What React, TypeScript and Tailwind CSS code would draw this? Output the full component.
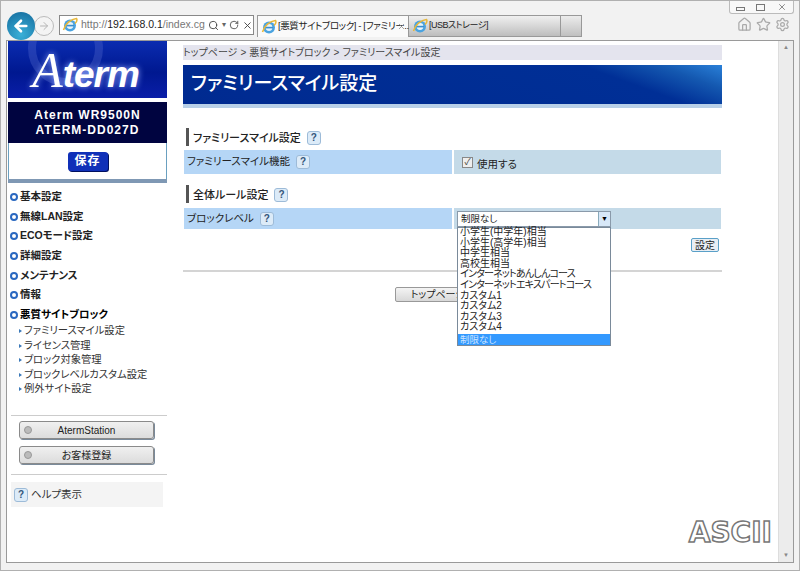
import { ArrowLeft, ArrowRight, Home, RotateCw, Search, Settings, Star, X } from "lucide-react";

const font = "font-['Liberation_Sans','Noto_Sans_CJK_JP',sans-serif] [font-feature-settings:'palt']";

const IeIcon = () => (
  <svg width="16" height="16" viewBox="0 0 16 16" className="shrink-0">
    <circle cx="8" cy="8.5" r="6" fill="#4aa3e0" />
    <circle cx="8" cy="8.5" r="3.4" fill="#e8f4fb" />
    <rect x="4" y="7.8" width="8" height="1.6" fill="#3b8fd0" />
    <path d="M1.5 13 C3 7 9 2 14.5 1.5 C15.5 3 14.5 5 13 6.5" fill="none" stroke="#e8b83a" strokeWidth="1.5" />
  </svg>
);

const HelpBadge = () => (
  <span className="inline-flex h-[14px] w-[14px] shrink-0 items-center justify-center rounded-[3px] border border-[#9dbbd8] bg-[#dcebf8] text-[10px] font-bold leading-none text-[#33557a]">
    ?
  </span>
);

const NavItem = ({ label, bold }: { label: string; bold?: boolean }) => (
  <div className={`flex h-[19.7px] items-center gap-[2px] whitespace-nowrap text-[10.5px] font-bold text-[#222] ${bold ? "text-black" : ""}`}>
    <span className="h-[8px] w-[8px] shrink-0 rounded-full border-[2px] border-[#2a68c0] bg-white" />
    {label}
  </div>
);

const SubItem = ({ label }: { label: string }) => (
  <div className="flex h-[14.5px] items-center gap-[2px] whitespace-nowrap pl-[9px] text-[10.3px] text-[#333]">
    <span className="h-0 w-0 border-y-[2.5px] border-l-[3px] border-y-transparent border-l-[#3a78b8]" />
    {label}
  </div>
);

const SideButton = ({ label }: { label: string }) => (
  <div className="relative flex h-[18px] w-[135px] items-center justify-center rounded-[3px] border border-[#8a8a8a] bg-[linear-gradient(#f0f0f0,#dcdcdc)] text-[10px] text-[#222] shadow-[1px_1px_0_#7a8a9a]">
    <span className="absolute left-[4px] h-[8px] w-[8px] rounded-full border border-[#999] bg-[#bbb]" />
    {label}
  </div>
);

const SectionHead = ({ label }: { label: string }) => (
  <div className="flex h-[18px] items-center gap-[4px] pl-[3px] text-[11px] text-[#222]">
    <span className="h-[18px] w-[3px] bg-[#555]" />
    <span className="pt-[2px] font-medium">{label}</span>
    <span className="ml-[2px]"><HelpBadge /></span>
  </div>
);

const levels = [
  "小学生(中学年)相当",
  "小学生(高学年)相当",
  "中学生相当",
  "高校生相当",
  "インターネットあんしんコース",
  "インターネットエキスパートコース",
  "カスタム1",
  "カスタム2",
  "カスタム3",
  "カスタム4",
];

const App = () => {
  return (
    <div className={`${font} relative flex h-[571px] w-[800px] flex-col overflow-hidden border border-[#b0b0b0] bg-[#f2f2f2]`}>
      {/* browser chrome */}
      <div className="flex h-[39px] shrink-0 flex-col">
        <div className="flex h-[15px] justify-end pr-[5px]">
          <div className="flex h-[13px] w-[65px] items-center justify-around rounded-b-[3px] border border-t-0 border-[#bbb] bg-[#f8f8f8] text-[#777]">
            <span className="mt-[3px] h-[4px] w-[9px] border border-[#777]" />
            <span className="h-[7px] w-[9px] border border-[#777]" />
            <X size={10} />
          </div>
        </div>
        <div className="flex items-start pl-[6px]">
          <div className="z-10 -mt-[3px] flex h-[28px] w-[28px] items-center justify-center rounded-full bg-[radial-gradient(circle_at_50%_80%,#3ab0d8,#146a9c)] text-white">
            <ArrowLeft size={18} strokeWidth={3.5} />
          </div>
          <div className="-ml-[1px] mt-[1px] flex h-[20px] w-[20px] items-center justify-center rounded-full border border-[#bbb] bg-[#f4f4f4] text-[#b5b5b5]">
            <ArrowRight size={12} />
          </div>
          <div className="ml-[5px] flex h-[20px] w-[195px] items-center gap-[3px] border border-[#888] bg-white pl-[2px] text-[10.5px] text-[#777]">
            <IeIcon />
            <span className="w-[124px] whitespace-nowrap">
              http://<span className="text-[#222]">192.168.0.1</span>/index.cg
            </span>
            <Search size={11} className="text-[#444]" />
            <span className="text-[8px] text-[#666]">▾</span>
            <RotateCw size={10} className="text-[#444]" />
            <X size={11} className="text-[#444]" />
          </div>
          <div className="ml-[3px] flex h-[22px] w-[152px] items-center gap-[1px] border border-b-0 border-[#999] bg-[#fafafa] pl-[3px] text-[9.5px] tracking-[-0.4px] text-[#222]">
            <IeIcon />
            <span className="w-[118px] whitespace-nowrap">[悪質サイトブロック] - [ファミリー..</span>
            <X size={9} className="text-[#888]" />
          </div>
          <div className="flex h-[22px] w-[152px] items-center gap-[1px] border border-l-0 border-[#999] bg-[linear-gradient(#f0f0f0,#bdbdbd)] pl-[3px] text-[9px] tracking-[-0.5px] text-[#222]">
            <IeIcon />
            [USBストレージ]
          </div>
          <div className="h-[22px] w-[21px] border border-l-0 border-[#999] bg-[linear-gradient(#ececec,#c0c0c0)]" />
          <div className="ml-auto flex gap-[4px] pr-[9px] pt-[2px] text-[#aaa]">
            <Home size={15} />
            <Star size={15} />
            <Settings size={15} />
          </div>
        </div>
      </div>

      {/* viewport */}
      <div className="mx-[5px] flex h-[523px] border border-[#9a9a9a] bg-white">
        <div className="relative flex min-w-0 flex-1">
          {/* sidebar */}
          <aside className="flex w-[160px] shrink-0 flex-col pl-[1px]">
            <div className="relative flex h-[57px] items-center justify-center overflow-hidden bg-[linear-gradient(#0a2cb0,#001890_55%,#0a1ea8)]">
              <span className="absolute left-[20px] top-[-30px] h-[75px] w-[75px] rounded-full border-[8px] border-[#4a62c8]/40" />
              <span className="relative mr-[4px] whitespace-nowrap leading-none text-white [text-shadow:0_0_6px_#8fa8ff]">
                <span className="font-['Liberation_Serif'] text-[50px] italic">A</span>
                <span className="font-['Liberation_Sans'] text-[37px] font-bold italic tracking-[-1px]">term</span>
              </span>
            </div>
            <div className="mt-[4px] flex h-[41px] flex-col items-center justify-center bg-[#000440] text-[12px] font-bold leading-[15px] tracking-[1px] text-white">
              <span>Aterm WR9500N</span>
              <span>ATERM-DD027D</span>
            </div>
            <div className="flex h-[36px] items-center justify-center border-x border-[#6aa0c0] bg-white">
              <span className="flex h-[19px] w-[40px] items-center justify-center rounded-[3px] bg-[#1030b8] text-[12px] font-bold tracking-[1px] text-white shadow-[1px_1px_0_#001060]">
                保存
              </span>
            </div>
            <div className="h-[4px] bg-[#7f98b4]" />
            <nav className="mt-[1px] pl-[2px] pt-[3px]">
              <NavItem label="基本設定" />
              <NavItem label="無線LAN設定" />
              <NavItem label="ECOモード設定" />
              <NavItem label="詳細設定" />
              <NavItem label="メンテナンス" />
              <NavItem label="情報" />
              <NavItem label="悪質サイトブロック" bold />
            </nav>
            <div className="-mt-[1px] pl-[2px]">
              <SubItem label="ファミリースマイル設定" />
              <SubItem label="ライセンス管理" />
              <SubItem label="ブロック対象管理" />
              <SubItem label="ブロックレベルカスタム設定" />
              <SubItem label="例外サイト設定" />
            </div>
            <div className="ml-[3px] mt-[19px] flex flex-col gap-[7px] border-y border-[#ccc] pb-[10px] pl-[8px] pt-[5px]">
              <SideButton label="AtermStation" />
              <SideButton label="お客様登録" />
            </div>
            <div className="ml-[3px] mt-[7px] flex h-[25px] w-[152px] items-center gap-[3px] bg-[#f4f4f4] pl-[3px] text-[10.5px] text-[#333]">
              <HelpBadge />
              ヘルプ表示
            </div>
          </aside>

          {/* main */}
          <main className="ml-[16px] w-[539px] shrink-0 pt-[4px]">
            <div className="flex h-[15px] items-center gap-[3px] bg-[#e4e4ee] text-[10px] text-[#444]">
              <span>トップページ</span>
              <span>&gt;</span>
              <span>悪質サイトブロック</span>
              <span>&gt;</span>
              <span>ファミリースマイル設定</span>
            </div>
            <div className="mt-[5px] flex h-[43px] items-center border-b-[4px] border-[#b8d0e8] bg-[linear-gradient(200deg,#2a80d8_0%,#1458b0_10%,#002f96_22%,#002a90_100%)] pl-[8px] text-[19px] font-medium text-white">
              ファミリースマイル設定
            </div>

            <div className="mt-[20px]">
              <SectionHead label="ファミリースマイル設定" />
            </div>
            <div className="mt-[4px] flex h-[24px] gap-[2px] px-[1px] text-[10.5px] text-[#222]">
              <div className="flex w-[268px] items-center gap-[6px] bg-[#b5d6f6] pl-[3px]">
                ファミリースマイル機能
                <HelpBadge />
              </div>
              <div className="flex flex-1 items-center gap-[4px] bg-[#c4dae8] pl-[8px]">
                <span className="flex h-[11px] w-[11px] items-center justify-center border border-[#888] bg-[#eee] text-[9px] leading-none text-[#444]">✓</span>
                <span className="pt-[5px]">使用する</span>
              </div>
            </div>

            <div className="mt-[11px]">
              <SectionHead label="全体ルール設定" />
            </div>
            <div className="relative z-10 mt-[5px] flex h-[21px] gap-[2px] px-[1px] text-[10.5px] text-[#222]">
              <div className="flex w-[268px] items-center gap-[6px] bg-[#b5d6f6] pl-[3px]">
                ブロックレベル
                <HelpBadge />
              </div>
              <div className="relative flex-1 bg-[#c4dae8] pl-[3px] pt-[3px]">
                <div className="flex h-[16px] w-[154px] items-center justify-between border border-[#8a9aaa] bg-white pl-[3px] text-[9.5px]">
                  制限なし
                  <span className="flex h-[14px] w-[12px] items-center justify-center border-l border-[#8ab] bg-[#d8e8f8] text-[7px] text-black">▼</span>
                </div>
                <div className="absolute left-[3px] top-[19px] w-[154px] border border-[#7a8a9a] bg-white text-[10px] leading-[10.6px] text-[#222]">
                  {levels.map((level) => (
                    <div
                      key={level}
                      className={`relative -top-[1px] whitespace-nowrap pl-[2px] ${level.startsWith("イン") ? "tracking-[-0.8px]" : ""}`}
                    >
                      {level}
                    </div>
                  ))}
                  <div className="h-[11px] bg-[#3399ff] pl-[2px] text-[9.5px] leading-[11px] text-[#cfe6ff]">制限なし</div>
                </div>
              </div>
            </div>

            <div className="mt-[9px] flex justify-end pr-[3px]">
              <span className="flex h-[14px] w-[28px] items-center justify-center rounded-[2px] border border-[#5aa0c8] bg-[#e8eef4] text-[10px] text-[#222]">
                設定
              </span>
            </div>
            <div className="mt-[18px] h-[2px] bg-[#d4d4d4]" />
            <div className="mt-[15px] pl-[212px]">
              <span className="flex h-[15px] w-[96px] items-center justify-center rounded-[2px] border border-[#999] bg-[linear-gradient(#f4f4f4,#d8d8d8)] text-[10px] text-[#222]">
                トップページへ
              </span>
            </div>
          </main>

          {/* watermark */}
          <span className="absolute bottom-[15px] right-[6px] font-['DejaVu_Sans'] text-[28px] font-bold leading-none text-white [-webkit-text-stroke:1.5px_#777]">
            ASCII
          </span>
        </div>

        {/* scrollbar */}
        <div className="flex w-[15px] shrink-0 flex-col items-center justify-between border-l border-[#ddd] bg-[#ececec] py-[2px] text-[6px] text-[#888]">
          <span>▲</span>
          <span>▼</span>
        </div>
      </div>
    </div>
  );
};

export default App;
